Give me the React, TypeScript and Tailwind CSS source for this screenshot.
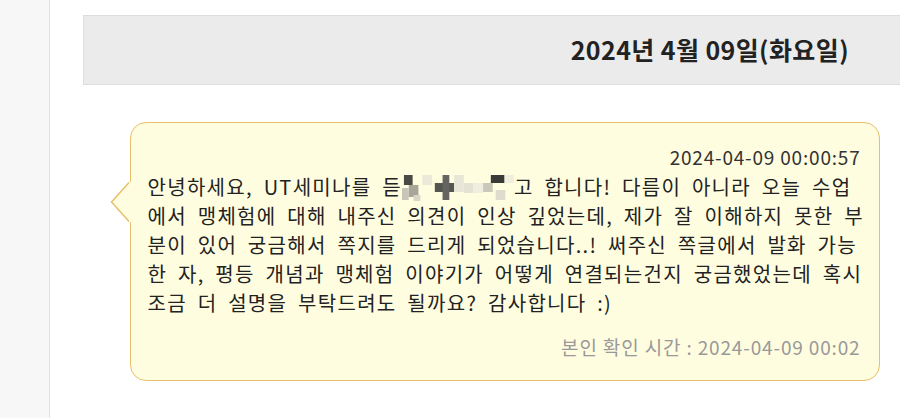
import React from "react";

const font = { fontFamily: '"Noto Sans CJK KR", "Noto Sans", sans-serif' };

function Mosaic() {
  const cells: [number, number, number, number, string][] = [
    [2, 3, 9, 10, "#4a4a45"],
    [7, 13, 10, 12, "#a8a698"],
    [0, 16, 7, 12, "#c8c6b8"],
    [12, 23, 7, 6, "#d8d6c8"],
    [21, 3, 10, 10, "#ece9d8"],
    [34, 11, 20, 9, "#555552"],
    [42, 3, 7, 25, "#666460"],
    [54, 3, 10, 17, "#e8e6d6"],
    [64, 11, 10, 10, "#e4e2d2"],
    [74, 11, 10, 10, "#f0eede"],
    [92, 3, 14, 8, "#3a3a38"],
    [84, 11, 10, 9, "#cac8b8"],
    [97, 18, 10, 10, "#dedccc"],
    [107, 3, 9, 8, "#f0eedd"],
  ];
  return (
    <svg width="112" height="29" viewBox="0 0 116 29" preserveAspectRatio="none" className="inline-block align-top">
      {cells.map((c, i) => (
        <rect key={i} x={c[0]} y={c[1]} width={c[2]} height={c[3]} fill={c[4]} />
      ))}
    </svg>
  );
}

export default function App() {
  return (
    <div className="flex h-[418px] w-[900px] overflow-hidden bg-white" style={font}>
      <div className="w-[50px] shrink-0 border-r border-[#e2e2e2] bg-[#f7f7f7]" />
      <div className="flex min-w-0 flex-1 flex-col pt-[15px] pl-[33px]">
        <div className="flex h-[70px] items-center justify-end border-y border-l border-[#dddddd] bg-[#ebebeb] pr-[51px]">
          <span className="text-[25px] font-bold tracking-[0.4px] text-[#222]">2024년 4월 09일(화요일)</span>
        </div>
        <div className="relative mt-[37px] ml-[47px] w-[750px] rounded-[16px] border-[1.5px] border-[#e6c06a] bg-[#fffde0] px-[16.5px] pt-[22px] pb-[21px]">
          <svg
            width="22"
            height="40"
            viewBox="0 0 22 40"
            className="absolute left-[-21px] top-[58.5px]"
          >
            <path d="M19.5 0 L1.5 20 L19.5 40" fill="#fffde0" stroke="#e6c06a" strokeWidth="1.5" />
            <rect x="19" y="0" width="3" height="40" fill="#fffde0" />
          </svg>
          <div className="pr-[2px] text-right text-[19px] leading-[24px] tracking-[0.8px] text-[#333]">2024-04-09 00:00:57</div>
          <div className="mt-[2.5px] whitespace-nowrap text-[20px] leading-[29px] tracking-[1.3px] [word-spacing:5px] text-[#222]">
            <div>
              안녕하세요, UT세미나를 듣<Mosaic />고 합니다! 다름이 아니라 오늘 수업
            </div>
            <div>에서 맹체험에 대해 내주신 의견이 인상 깊었는데, 제가 잘 이해하지 못한 부</div>
            <div>분이 있어 궁금해서 쪽지를 드리게 되었습니다..! 써주신 쪽글에서 발화 가능</div>
            <div>한 자, 평등 개념과 맹체험 이야기가 어떻게 연결되는건지 궁금했었는데 혹시</div>
            <div>조금 더 설명을 부탁드려도 될까요? 감사합니다 :)</div>
          </div>
          <div className="mt-[18px] pr-[2px] text-right text-[19px] leading-[24px] tracking-[0.85px] text-[#999]">
            본인 확인 시간 : 2024-04-09 00:02
          </div>
        </div>
      </div>
    </div>
  );
}
